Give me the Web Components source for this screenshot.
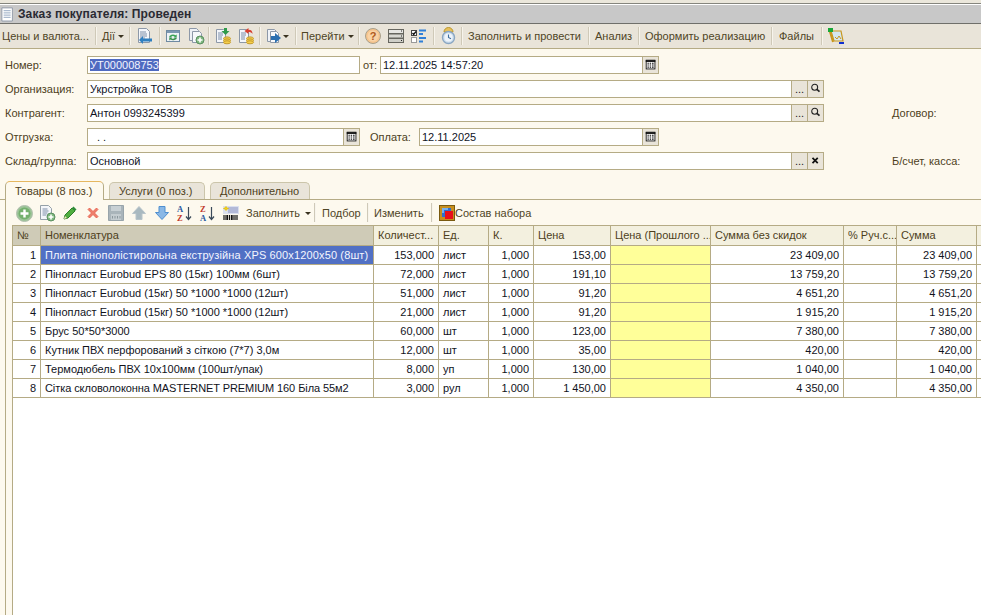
<!DOCTYPE html>
<html lang="ru">
<head>
<meta charset="utf-8">
<title>Заказ покупателя</title>
<style>
  html, body { margin: 0; height: 100%; overflow: hidden; background: #fdf9ee; }
  body { font: 11px "Liberation Sans", Arial, sans-serif; color: #4a3d1e; }
</style>
</head>
<body>
<order-form></order-form>

<script>
// 16x16 toolbar pictures, drawn by hand
const doc = `<path d="M2.5 .5h8l3 3v11h-11z" fill="#f4f6fa" stroke="#8d98a8"/><path d="M4 4h6M4 6h7M4 8h7M4 10h5" stroke="#7d8ea8"/>`;
const coins = `<ellipse cx="12" cy="10.5" rx="3.5" ry="1.6" fill="#f6cf4a" stroke="#c49a2c"/><ellipse cx="12" cy="12.5" rx="3.5" ry="1.6" fill="#f6cf4a" stroke="#c49a2c"/><ellipse cx="12" cy="14.3" rx="3.5" ry="1.5" fill="#f6cf4a" stroke="#c49a2c"/>`;
const plusDot = `<circle cx="12" cy="12" r="4" fill="#7fb87f" stroke="#5c8f62"/><path d="M12 9.5v5M9.5 12h5" stroke="#fff" stroke-width="1.6"/>`;
const sortArrow = `<path d="M11.500 2v12M9 11.500l2.500 3 2.500-3" fill="none" stroke="#3a4a5a" stroke-width="1.200"/>`;
const ICONS = {
  backdoc: doc + `<path d="M16 10.5h-9V8l-4 4 4 4v-2.500h9z" fill="#2f7fc0"/>`,
  refresh: `<rect x="1.500" y="2.500" width="13" height="11" fill="#eef2f6" stroke="#6f8aa2"/><rect x="2" y="3" width="12" height="2" fill="#7d98b2"/><path d="M4 9.200a4 3 0 0 1 6.500-2l1.200-.8v3h-3l.9-.8a2.500 2 0 0 0-3.600.6z" fill="#3aa356"/><path d="M12 9.800a4 3 0 0 1-6.500 1.800l-1.200.8v-3h3l-.9.800a2.500 2 0 0 0 3.600-.4z" fill="#3a8f4c"/>`,
  copyadd: `<path d="M1.500 .5h7l2 2v10h-9z" fill="#eef1f6" stroke="#8d98a8"/><path d="M4.500 3.500h7l2 2v9h-9z" fill="#f6f8fb" stroke="#8d98a8"/>` + plusDot,
  docin: `<path d="M1.500 1.500h7l2 2v11h-9z" fill="#f4f6fa" stroke="#8d98a8"/><path d="M3 5h5M3 7h5M3 9h4M3 11h4" stroke="#7d8ea8"/><path d="M9 0h3v3h2.500l-4 4-4-4H9z" fill="#2f9a4a"/>` + coins,
  docout: `<path d="M1.500 1.500h7l2 2v11h-9z" fill="#f4f6fa" stroke="#8d98a8"/><path d="M3 5h5M3 7h5M3 9h4M3 11h4" stroke="#7d8ea8"/><path d="M6.500 3l4-3v1.700c3 0 4 1.500 4 4.300-1-1.500-2-2-4-2V6z" fill="#d8402f"/>` + coins,
  send: `<path d="M1.500 1.500h7l2 2v10h-9z" fill="#f0f3f8" stroke="#8d98a8"/><path d="M4.500 3.500h6l2 2v9h-8z" fill="#f8f9fb" stroke="#8d98a8"/><path d="M5 8h4V5l6 5-6 5v-3H5z" fill="#2b6fb0"/>`,
  help: `<circle cx="8" cy="8" r="7.500" fill="#f7c48c" stroke="#a8a08c"/><circle cx="8" cy="8" r="5.500" fill="#f9d3a6"/><text x="8" y="12" font-size="11" font-weight="700" text-anchor="middle" fill="#b05a20" font-family="Liberation Sans">?</text>`,
  rows: `<rect x="0.500" y="1.500" width="15" height="4" fill="#e6e6e2" stroke="#66665f"/><rect x="0.500" y="6" width="15" height="4" fill="#d8d8d2" stroke="#66665f"/><rect x="0.500" y="10.500" width="15" height="4" fill="#cfcfc8" stroke="#66665f"/><path d="M13 3h1M13 8h1M13 12.500h1" stroke="#222"/>`,
  checks: `<rect x=".5" y="2.500" width="5" height="5" fill="#fff" stroke="#444"/><path d="M1.500 5l1.200 1.500L5 3.500" fill="none" stroke="#111" stroke-width="1.300"/><rect x=".5" y="9.500" width="5" height="5" fill="#fff" stroke="#999"/><path d="M8 2.500h7M8 6h4M8 10h7M8 13.500h4" stroke="#2f7fd8" stroke-width="2"/>`,
  clock: `<path d="M3 4a3 3 0 0 1 9 0z" fill="#e8c05a" stroke="#b8962e"/><circle cx="7.500" cy="9.500" r="6" fill="#cfdfee" stroke="#8aa6c2" stroke-width="1.400"/><circle cx="7.500" cy="9.500" r="4" fill="#eef4fa"/><path d="M7.500 6.500v3l2.500 1.200" fill="none" stroke="#3f6f9f" stroke-width="1.100"/>`,
  report: `<path d="M3 3h10l2 10H6z" fill="#d4e6ee" stroke="#c8961c" stroke-width="1.200"/><path d="M1.500 2l3.500 12" fill="none" stroke="#c8961c" stroke-width="2"/><rect x="0" y="0" width="5" height="4" fill="#18a838"/><path d="M7 9l2 2 2-3 2 3" fill="none" stroke="#c8961c"/><rect x="11" y="14" width="5" height="2" fill="#1030d0"/>`,
  add: `<circle cx="8.500" cy="8.500" r="8" fill="#9cc498" stroke="#b4c0b0"/><circle cx="8.500" cy="8.500" r="6" fill="#74b06e"/><path d="M8.500 4.500v8M4.500 8.500h8" stroke="#fff" stroke-width="2.400"/>`,
  docadd: `<path d="M1.500 .5h8l3 3v11h-11z" fill="#f4f6fa" stroke="#94a0a8"/><path d="M3.500 4h5M3.500 6h6M3.500 8h5M3.500 10h4" stroke="#7d8ea8"/>` + plusDot,
  pencil: `<path d="M2 14l1-4 7-7 3 3-7 7z" fill="#4fae3f" stroke="#2e7d2a"/><path d="M10 3l1.500-1.500 3 3L13 6z" fill="#2e8d3a"/><path d="M2 14l1-3 2 2z" fill="#f3e4b8"/>`,
  del: `<path d="M3 4.500l1.500-1.500L8 6.500 11.500 3 13 4.500 9.500 8l3.500 3.500-1.500 1.500L8 9.500 4.500 13 3 11.500 6.500 8z" fill="#ee7f6c" stroke="#e45a48" stroke-width=".8"/>`,
  save: `<path d="M.5 .5h15v15h-15z" fill="#a9b4ba" stroke="#98a4aa"/><rect x="3" y="1" width="10" height="5" fill="#c8d0d4"/><rect x="3" y="9" width="10" height="6" fill="#c4ccd0"/><path d="M4.500 11v2.500M7 11v2.500M9.500 11v2.500M12 11v2.500" stroke="#8a969c"/>`,
  up: `<path d="M8 1.500l6.500 7H11v6H5v-6H1.500z" fill="#a9b9c0" stroke="#b8c4ca"/>`,
  down: `<path d="M5 1.500h6v6h3.500L8 14.500l-6.500-7H5z" fill="#8ab8e6" stroke="#4f8fd0"/>`,
  az: `<text x="0" y="6.500" font-size="8.500" font-weight="700" fill="#2a5aa0" font-family="Liberation Serif">A</text><text x="0" y="16" font-size="8.500" font-weight="700" fill="#c0392b" font-family="Liberation Serif">Z</text>` + sortArrow,
  za: `<text x="0" y="6.500" font-size="8.500" font-weight="700" fill="#c0392b" font-family="Liberation Serif">Z</text><text x="0" y="16" font-size="8.500" font-weight="700" fill="#2a5aa0" font-family="Liberation Serif">A</text>` + sortArrow,
  barcode: `<rect x="0" y="1" width="16" height="8" fill="#dbe0ee"/><path d="M5 3h10M5 5h10M5 7h10" stroke="#8a92c0"/><path d="M3 1.500l1 1.500 1.500 .5-1.500 .5-1 1.500-1-1.500-1.500-.5 1.500-.5z" fill="#f0d020" stroke="#e8c000" stroke-width=".8"/><path d="M1 10v5M3 10v5M4.500 10v5M6.500 10v5M8.500 10v5M10 10v5M12 10v5M14 10v5" stroke="#111" stroke-width="1.200"/>`,
  kit: `<rect x=".5" y=".5" width="15" height="15" fill="#c78f1e" stroke="#7a5a10"/><rect x="3" y="3" width="9" height="9" fill="#2f6fd0"/><path d="M3 3h6v2H5v3H3z" fill="#78b0ec"/><rect x="6" y="6" width="8" height="8" fill="#e8101a"/>`,
  calendar: `<rect x="2.500" y="2.500" width="10" height="10" fill="#fff" stroke="#111"/><path d="M2 3.500h11" stroke="#111" stroke-width="2"/><path d="M4 6h1.500M6.500 6h1.500M9 6h2M4 8h1.500M6.500 8h1.500M9 8h2M4 10.500h1.500M6.500 10.500h1.500M9 10.500h2" stroke="#111" stroke-width="1.400"/>`,
  search: `<circle cx="6.500" cy="6" r="3.400" fill="none" stroke="#222" stroke-width="1.200"/><path d="M9 8.500l3 2.500" stroke="#222" stroke-width="2"/>`,
  clear: `<path d="M4 4.500l6 6M10 4.500l-6 6" stroke="#111" stroke-width="2"/>`,
  page: `<path d="M1 1h12v15H1z" fill="#fff" stroke="#8a94a4"/><path d="M3 4h8M3 6h8M3 8h8M3 10h8M3 12h8" stroke="#9fb0c8"/>`
};

class UiIcon extends HTMLElement {
  connectedCallback() {
    const size = this.getAttribute("size") || 16;
    const shadow = this.shadowRoot || this.attachShadow({ mode: "open" });
    shadow.innerHTML = `<style>:host { display: block; width: ${size}px; height: ${size}px; flex: none; } svg { display: block; overflow: visible; }</style>
      <svg width="${size}" height="${size}" viewBox="0 0 16 16">${ICONS[this.getAttribute("name")] || ""}</svg>`;
  }
}
customElements.define("ui-icon", UiIcon);

class DropArrow extends HTMLElement {
  constructor() {
    super();
    this.attachShadow({ mode: "open" }).innerHTML = `<style>
      :host { display: block; flex: none; width: 0; height: 0; margin-top: 1px;
        border-left: 3px solid transparent; border-right: 3px solid transparent; border-top: 3px solid #3a3320; }
    </style>`;
  }
}
customElements.define("drop-arrow", DropArrow);

// one stretch of a toolbar, ends with the etched separator
class ToolSeg extends HTMLElement {
  constructor() {
    super();
    this.attachShadow({ mode: "open" }).innerHTML = `<style>
      :host { display: flex; align-items: center; flex: none; box-sizing: border-box; height: 100%;
        white-space: nowrap; color: #4f4526; position: relative; }
      :host([sep])::after { content: ""; position: absolute; right: 0; top: 3px; bottom: 3px; width: 1px; background: #cfc9b8; box-shadow: 1px 0 0 #f7f4ec; }
    </style><slot></slot>`;
  }
  connectedCallback() {
    const w = this.getAttribute("w");
    if (w) this.style.width = w + "px";
    this.style.paddingLeft = (this.getAttribute("pl") || 0) + "px";
    this.style.gap = (this.getAttribute("gap") || 0) + "px";
  }
}
customElements.define("tool-seg", ToolSeg);

class TitleBar extends HTMLElement {
  constructor() {
    super();
    this.attachShadow({ mode: "open" }).innerHTML = `<style>
      :host { display: block; background: #ebe7db; padding-top: 3px; }
      .bar { height: 19px; display: flex; align-items: center; gap: 3px; padding-left: 1px; background: #c8c8c8;
        border-top: 1px solid #85857d; box-shadow: inset 0 1px 0 #fff; border-bottom: 1px solid #6f6f6a;
        font-weight: 700; font-size: 12px; letter-spacing: .1px; color: #2a2a33; }
    </style>
    <div class="bar"><ui-icon name="page" size="14"></ui-icon><slot></slot></div>`;
  }
}
customElements.define("title-bar", TitleBar);

class MainToolbar extends HTMLElement {
  constructor() {
    super();
    this.attachShadow({ mode: "open" }).innerHTML = `<style>
      :host { display: flex; height: 24px; background: #e9e4d9; border-bottom: 1px solid #b5ab85; }
    </style><slot></slot>`;
  }
}
customElements.define("main-toolbar", MainToolbar);

class FormField extends HTMLElement {
  constructor() {
    super();
    this.attachShadow({ mode: "open" }).innerHTML = `<style>
      :host { display: flex; box-sizing: border-box; height: 18px; flex: none; background: #fff; border: 1px solid #b5ab85;
        color: #10131f; line-height: 16px; white-space: nowrap; }
      .val { flex: 1; padding-left: 2px; overflow: hidden; }
      :host([indent]) .val { padding-left: 9px; }
      .btn { width: 15px; background: #e9e4d9; border-left: 1px solid #b5ab85; display: flex; align-items: center; justify-content: center; color: #222; }
      .dots { line-height: 14px; font-size: 11px; }
    </style><div class="val"><slot></slot></div><span id="btns" style="display:contents"></span>`;
  }
  connectedCallback() {
    const btns = (this.getAttribute("buttons") || "").split(" ").filter(Boolean);
    this.shadowRoot.getElementById("btns").innerHTML = btns.map(b =>
      b === "dots" ? `<div class="btn dots">...</div>` : `<div class="btn"><ui-icon name="${b}" size="14"></ui-icon></div>`
    ).join("");
    const w = this.getAttribute("w");
    if (w) this.style.width = w + "px";
  }
}
customElements.define("form-field", FormField);

class FormRow extends HTMLElement {
  constructor() {
    super();
    this.attachShadow({ mode: "open" }).innerHTML = `<style>
      :host { display: flex; align-items: center; height: 18px; white-space: nowrap; }
    </style><slot></slot>`;
  }
}
customElements.define("form-row", FormRow);

class FieldLabel extends HTMLElement {
  constructor() {
    super();
    this.attachShadow({ mode: "open" }).innerHTML = `<style>
      :host { display: block; flex: none; box-sizing: border-box; color: #4d3f1c; }
    </style><slot></slot>`;
  }
  connectedCallback() {
    const w = this.getAttribute("w");
    if (w) this.style.width = w + "px";
    this.style.paddingLeft = (this.getAttribute("pl") || 0) + "px";
  }
}
customElements.define("field-label", FieldLabel);

class TabStrip extends HTMLElement {
  constructor() {
    super();
    this.attachShadow({ mode: "open" }).innerHTML = `<style>
      :host { display: flex; align-items: flex-end; gap: 5px; height: 19px; box-sizing: border-box; padding-left: 5px;
        margin-top: 11px; border-bottom: 1px solid #b5ab85; }
    </style><slot></slot>`;
  }
}
customElements.define("tab-strip", TabStrip);

class TabItem extends HTMLElement {
  constructor() {
    super();
    this.attachShadow({ mode: "open" }).innerHTML = `<style>
      :host { display: block; box-sizing: border-box; height: 17px; padding-left: 9px; background: #e9e4d9; color: #4d3f1c;
        border: 1px solid #cbc5aa; border-bottom: 0; border-radius: 5px 5px 0 0; line-height: 16px; white-space: nowrap; }
      :host([active]) { height: 19px; margin-bottom: -1px; background: #fdf9ee; border-color: #b5ab85; border-top: 1px solid #e5b760; line-height: 18px; }
    </style><slot></slot>`;
  }
  connectedCallback() {
    this.style.width = this.getAttribute("w") + "px";
  }
}
customElements.define("tab-item", TabItem);

const COLUMNS = [
  { t: "№", w: 28, cur: true },
  { t: "Номенклатура", w: 333, cur: true },
  { t: "Количест...", w: 65 },
  { t: "Ед.", w: 50 },
  { t: "К.", w: 45 },
  { t: "Цена", w: 77 },
  { t: "Цена (Прошлого ...", w: 100 },
  { t: "Сумма без скидок", w: 133 },
  { t: "% Руч.с...", w: 53 },
  { t: "Сумма", w: 80 },
  { t: "", w: 5 }
];
const ROWS = [
  { name: "Плита пінополістирольна екструзійна XPS 600х1200х50 (8шт)", qty: "153,000", unit: "лист", price: "153,00", gross: "23 409,00", total: "23 409,00", ls: .14 },
  { name: "Пінопласт Eurobud EPS 80 (15кг) 100мм (6шт)", qty: "72,000", unit: "лист", price: "191,10", gross: "13 759,20", total: "13 759,20" },
  { name: "Пінопласт Eurobud (15кг) 50 *1000 *1000 (12шт)", qty: "51,000", unit: "лист", price: "91,20", gross: "4 651,20", total: "4 651,20" },
  { name: "Пінопласт Eurobud (15кг) 50 *1000 *1000 (12шт)", qty: "21,000", unit: "лист", price: "91,20", gross: "1 915,20", total: "1 915,20" },
  { name: "Брус 50*50*3000", qty: "60,000", unit: "шт", price: "123,00", gross: "7 380,00", total: "7 380,00" },
  { name: "Кутник ПВХ перфорований з сіткою (7*7) 3,0м", qty: "12,000", unit: "шт", price: "35,00", gross: "420,00", total: "420,00" },
  { name: "Термодюбель ПВХ 10х100мм (100шт/упак)", qty: "8,000", unit: "уп", price: "130,00", gross: "1 040,00", total: "1 040,00" },
  { name: "Сітка скловолоконна MASTERNET PREMIUM 160 Біла 55м2", qty: "3,000", unit: "рул", price: "1 450,00", gross: "4 350,00", total: "4 350,00", ls: -.08 }
];

class DataGrid extends HTMLElement {
  constructor() {
    super();
    const tracks = COLUMNS.map(c => c.w + "px").join(" ");
    const head = COLUMNS.map(c => `<div class="h${c.cur ? " cur" : ""}">${c.t}</div>`).join("");
    const rows = ROWS.map((r, i) => `
      <div class="c n">${i + 1}</div>
      <div class="c${i === 0 ? " sel" : ""}" style="letter-spacing:${r.ls || 0}px">${r.name}</div>
      <div class="c n">${r.qty}</div>
      <div class="c">${r.unit}</div>
      <div class="c n">1,000</div>
      <div class="c n">${r.price}</div>
      <div class="c y"></div>
      <div class="c n">${r.gross}</div>
      <div class="c"></div>
      <div class="c n">${r.total}</div>
      <div class="c"></div>`).join("");
    this.attachShadow({ mode: "open" }).innerHTML = `<style>
      :host { display: block; flex: 1; margin-left: 6px; background: #fff; border-left: 1px solid #b5ab85; border-top: 1px solid #b5ab85; overflow: hidden; color: #11131c; }
      .g { display: grid; grid-template-columns: ${tracks}; grid-template-rows: 20px; grid-auto-rows: 19px; }
      .g > div { box-sizing: border-box; border-right: 1px solid #b5ab85; border-bottom: 1px solid #b5ab85; white-space: nowrap; overflow: hidden; padding: 0 4px; line-height: 18px; }
      .g > .h { background: #f3f0df; color: #4d3f1c; line-height: 19px; }
      .g > .h.cur { background: #cfcbb7; }
      .n { text-align: right; }
      .sel { background: #5170c4; color: #f4f6ff; }
      .y { background: #ffff99; }
    </style><div class="g">${head}${rows}</div>`;
  }
}
customElements.define("data-grid", DataGrid);

class TabPanel extends HTMLElement {
  constructor() {
    super();
    this.attachShadow({ mode: "open" }).innerHTML = `<style>
      :host { display: flex; flex-direction: column; flex: 1; min-height: 0; margin-left: 5px; border-left: 1px solid #b5ab85; }
      .tools { display: flex; height: 25px; flex: none; }
    </style><div class="tools"><slot name="tools"></slot></div><slot></slot>`;
  }
}
customElements.define("tab-panel", TabPanel);

class OrderForm extends HTMLElement {
  constructor() {
    super();
    this.attachShadow({ mode: "open" }).innerHTML = `<style>
      :host { display: flex; flex-direction: column; height: 100vh; overflow: hidden; }
      .form { display: flex; flex-direction: column; gap: 6px; padding-top: 7px; }
      .picked { background: #4f6ac0; color: #f2f4ff; }
    </style>
    <title-bar>Заказ покупателя: Проведен</title-bar>
    <main-toolbar>
      <tool-seg w="96" pl="2" sep>Цены и валюта...</tool-seg>
      <tool-seg w="34" pl="6" gap="3" sep>Дії<drop-arrow></drop-arrow></tool-seg>
      <tool-seg w="30" pl="6" sep><ui-icon name="backdoc"></ui-icon></tool-seg>
      <tool-seg w="49" pl="5" gap="7" sep><ui-icon name="refresh"></ui-icon><ui-icon name="copyadd"></ui-icon></tool-seg>
      <tool-seg w="51" pl="6" gap="7" sep><ui-icon name="docin"></ui-icon><ui-icon name="docout"></ui-icon></tool-seg>
      <tool-seg w="36" pl="6" gap="1" sep><ui-icon name="send"></ui-icon><drop-arrow></drop-arrow></tool-seg>
      <tool-seg w="63" pl="5" gap="3" sep>Перейти<drop-arrow></drop-arrow></tool-seg>
      <tool-seg w="75" pl="6" gap="7" sep><ui-icon name="help"></ui-icon><ui-icon name="rows"></ui-icon><ui-icon name="checks"></ui-icon></tool-seg>
      <tool-seg w="28" pl="7" sep><ui-icon name="clock"></ui-icon></tool-seg>
      <tool-seg w="127" pl="6" sep>Заполнить и провести</tool-seg>
      <tool-seg w="50" pl="6" sep>Анализ</tool-seg>
      <tool-seg w="133" pl="6" sep>Оформить реализацию</tool-seg>
      <tool-seg w="50" pl="7" sep>Файлы</tool-seg>
      <tool-seg pl="6"><ui-icon name="report"></ui-icon></tool-seg>
    </main-toolbar>
    <div class="form">
      <form-row>
        <field-label w="87" pl="5">Номер:</field-label>
        <form-field w="273"><span class="picked">УТ000008753</span></form-field>
        <field-label w="20" pl="3">от:</field-label>
        <form-field w="279" buttons="calendar">12.11.2025 14:57:20</form-field>
      </form-row>
      <form-row>
        <field-label w="87" pl="5">Организация:</field-label>
        <form-field w="737" buttons="dots search">Укрстройка ТОВ</form-field>
      </form-row>
      <form-row>
        <field-label w="87" pl="5">Контрагент:</field-label>
        <form-field w="737" buttons="dots search">Антон 0993245399</form-field>
        <field-label pl="68">Договор:</field-label>
      </form-row>
      <form-row>
        <field-label w="87" pl="5">Отгрузка:</field-label>
        <form-field w="273" indent buttons="calendar">. .</form-field>
        <field-label w="59" pl="10">Оплата:</field-label>
        <form-field w="240" buttons="calendar">12.11.2025</form-field>
      </form-row>
      <form-row>
        <field-label w="87" pl="5">Склад/группа:</field-label>
        <form-field w="737" buttons="dots clear">Основной</form-field>
        <field-label pl="68">Б/счет, касса:</field-label>
      </form-row>
    </div>
    <tab-strip>
      <tab-item w="99" active>Товары (8 поз.)</tab-item>
      <tab-item w="96">Услуги (0 поз.)</tab-item>
      <tab-item w="100">Дополнительно</tab-item>
    </tab-strip>
    <tab-panel>
      <tool-seg slot="tools" w="309" pl="10" gap="7" sep>
        <ui-icon name="add"></ui-icon><ui-icon name="docadd"></ui-icon><ui-icon name="pencil"></ui-icon><ui-icon name="del"></ui-icon><ui-icon name="save"></ui-icon><ui-icon name="up"></ui-icon><ui-icon name="down"></ui-icon><ui-icon name="az"></ui-icon><ui-icon name="za"></ui-icon><ui-icon name="barcode"></ui-icon><span style="margin-right:-2px">Заполнить</span><drop-arrow></drop-arrow>
      </tool-seg>
      <tool-seg slot="tools" w="53" pl="7" sep>Подбор</tool-seg>
      <tool-seg slot="tools" w="64" pl="6" sep>Изменить</tool-seg>
      <tool-seg slot="tools" pl="7"><ui-icon name="kit"></ui-icon>Состав набора</tool-seg>
      <data-grid></data-grid>
    </tab-panel>`;
  }
}
customElements.define("order-form", OrderForm);
</script>
</body>
</html>
